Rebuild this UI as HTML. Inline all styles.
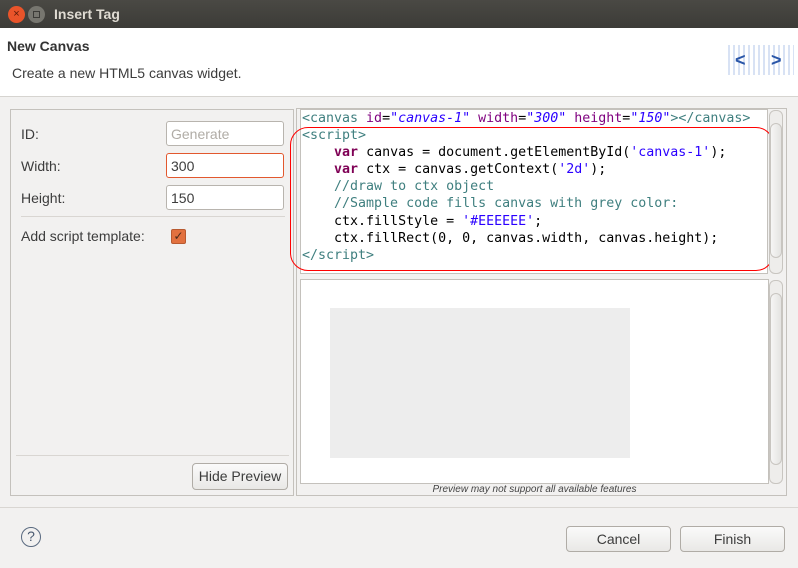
<!DOCTYPE html>
<html><head><style>
*{box-sizing:border-box;margin:0;padding:0}
body{width:798px;height:568px;background:#f2f1f0;font-family:"Liberation Sans",sans-serif;font-size:14px;color:#3c3c3c;position:relative;overflow:hidden}
.abs{position:absolute}
.title{left:0;top:0;width:798px;height:28px;background:linear-gradient(#4a4944,#3c3b37);}
.title span{position:absolute;left:54px;top:6px;color:#dfdbd2;font-weight:bold;font-size:14px}
.hdr{left:0;top:28px;width:798px;height:69px;background:#fff;border-bottom:1px solid #d6d4d0}
.inp{position:absolute;background:#fff;border:1px solid #b8b4ae;border-radius:3px;height:25px;font-size:14px;padding:4px 4px}
.btn{position:absolute;border:1px solid #b0aca6;border-radius:4px;background:linear-gradient(#fafafa,#e9e8e6);text-align:center;font-size:14px;color:#3c3c3c}
pre{font-family:"DejaVu Sans Mono",monospace;font-size:13.3px;line-height:17.1px;color:#3f7f7f;white-space:pre}
.k{color:#7f0055;font-weight:bold}.s{color:#2a00ff}.a{color:#7f007f}.v{color:#2a00ff;font-style:italic}.c{color:#3f7f7f}.t{color:#000}
.sb{position:absolute;background:#eeedeb;border:1px solid #c8c5c0;border-radius:6px}
</style></head><body>
<div class="abs title">
<div class="abs" style="left:8px;top:6px;width:17px;height:17px;border-radius:50%;background:#e9542a;color:#5a1a08;font-size:11px;text-align:center;line-height:17px">×</div>
<div class="abs" style="left:28px;top:6px;width:17px;height:17px;border-radius:50%;background:#77766f"><div class="abs" style="left:5px;top:5px;width:7px;height:7px;border:1px solid #3c3b37"></div></div>
<span>Insert Tag</span></div>
<div class="abs hdr">
<div class="abs" style="left:7px;top:10px;font-weight:bold;font-size:14px;color:#333">New Canvas</div>
<div class="abs" style="left:12px;top:37px;font-size:14px">Create a new HTML5 canvas widget.</div>
<div class="abs" style="left:728px;top:17px;width:66px;height:30px;background:repeating-linear-gradient(90deg,#d8e2f4 0 2px,#fff 2px 5px)"></div>
<div class="abs" style="left:735px;top:22px;color:#2a56a8;font-size:18px;font-weight:bold">&lt;</div>
<div class="abs" style="left:771px;top:22px;color:#2a56a8;font-size:18px;font-weight:bold">&gt;</div>
</div>
<div class="abs" style="left:10px;top:109px;width:284px;height:387px;border:1px solid #c4c1bc"></div>
<div class="abs" style="left:21px;top:126px">ID:</div>
<div class="abs" style="left:21px;top:158px">Width:</div>
<div class="abs" style="left:21px;top:190px">Height:</div>
<div class="inp" style="left:166px;top:121px;width:118px;color:#b0aca6">Generate</div>
<div class="inp" style="left:166px;top:153px;width:118px;border-color:#e2582e">300</div>
<div class="inp" style="left:166px;top:185px;width:118px">150</div>
<div class="abs" style="left:21px;top:216px;width:264px;border-top:1px solid #d9d6d2"></div>
<div class="abs" style="left:21px;top:228px">Add script template:</div>
<div class="abs" style="left:171px;top:229px;width:15px;height:15px;background:#e2713f;border:1px solid #b85a30;border-radius:2px;color:#4a2a1a;font-size:12px;line-height:13px;text-align:center">✓</div>
<div class="abs" style="left:16px;top:455px;width:273px;border-top:1px solid #d9d6d2"></div>
<div class="btn" style="left:192px;top:463px;width:96px;height:27px;line-height:25px">Hide Preview</div>
<div class="abs" style="left:296px;top:108px;width:491px;height:388px;border:1px solid #c4c1bc"></div>
<div class="abs" style="left:300px;top:109px;width:468px;height:165px;background:#fff;border:1px solid #c4c1bc"></div>
<pre class="abs" style="left:302px;top:110px"><span class="c">&lt;canvas </span><span class="a">id</span><span class="t">=</span><span class="v">"canvas-1"</span> <span class="a">width</span><span class="t">=</span><span class="v">"300"</span> <span class="a">height</span><span class="t">=</span><span class="v">"150"</span>&gt;&lt;/canvas&gt;
&lt;script&gt;
<span class="t">    <span class="k">var</span> canvas = document.getElementById(<span class="s">'canvas-1'</span>);
    <span class="k">var</span> ctx = canvas.getContext(<span class="s">'2d'</span>);</span>
    //draw to ctx object
    //Sample code fills canvas with grey color:
<span class="t">    ctx.fillStyle = <span class="s">'#EEEEEE'</span>;
    ctx.fillRect(0, 0, canvas.width, canvas.height);</span>
&lt;/script&gt;</pre>
<div class="abs" style="left:290px;top:127px;width:484px;height:144px;border:1px solid #f00;border-radius:18px"></div>
<div class="sb" style="left:769px;top:110px;width:14px;height:164px"></div>
<div class="sb" style="left:770px;top:123px;width:12px;height:135px;background:linear-gradient(90deg,#f6f6f5,#e4e3e1)"></div>
<div class="abs" style="left:300px;top:279px;width:469px;height:205px;background:#fff;border:1px solid #c4c1bc"></div>
<div class="abs" style="left:330px;top:308px;width:300px;height:150px;background:#ededed"></div>
<div class="sb" style="left:769px;top:280px;width:14px;height:204px"></div>
<div class="sb" style="left:770px;top:293px;width:12px;height:172px;background:linear-gradient(90deg,#f6f6f5,#e4e3e1)"></div>
<div class="abs" style="left:301px;top:484px;width:467px;text-align:center;font-style:italic;font-size:10px;color:#444">Preview may not support all available features</div>
<div class="abs" style="left:0;top:507px;width:798px;border-top:1px solid #d9d6d2"></div>
<div class="abs" style="left:21px;top:527px;width:20px;height:20px;border:1.5px solid #5a6a80;border-radius:50%;text-align:center;font-size:14px;line-height:17px;color:#4a5a70">?</div>
<div class="btn" style="left:566px;top:526px;width:105px;height:26px;line-height:24px">Cancel</div>
<div class="btn" style="left:680px;top:526px;width:105px;height:26px;line-height:24px">Finish</div>
</body></html>
